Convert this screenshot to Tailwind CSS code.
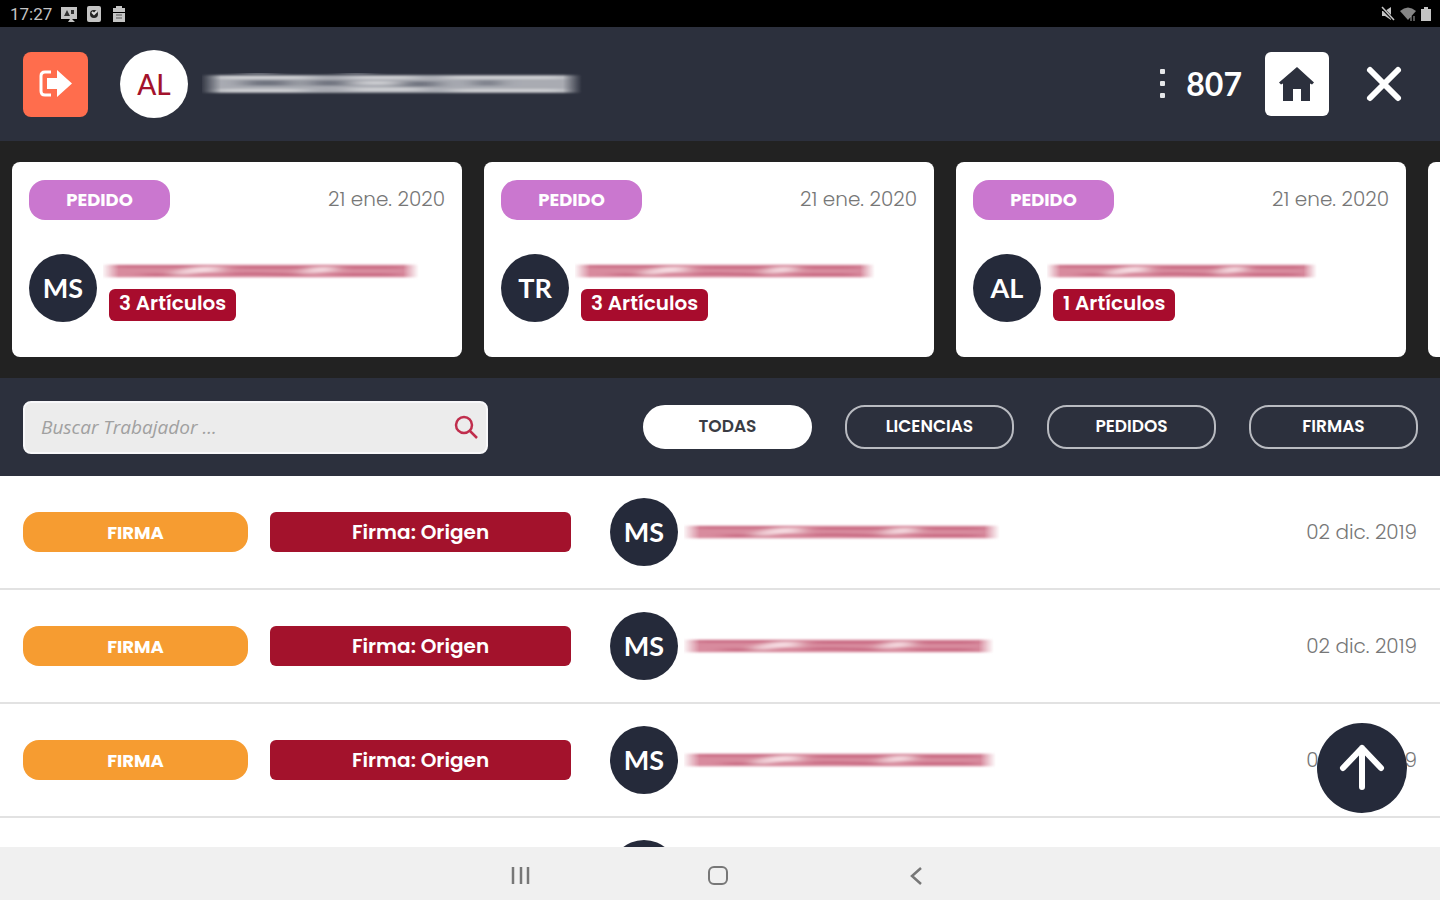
<!DOCTYPE html>
<html lang="es">
<head>
  <meta charset="UTF-8">
  <meta name="viewport" content="width=device-width, initial-scale=1.0">
  <title>Tareas pendientes</title>
  <script src="https://cdn.jsdelivr.net/npm/@tailwindcss/browser@4"></script>
</head>
<body class="h-screen flex flex-col overflow-hidden bg-white font-[Poppins,Inter,sans-serif]">

  <!-- Trazos para nombres ocultos -->
  <svg class="absolute w-0 h-0" aria-hidden="true">
    <defs>
      <linearGradient id="fade" x1="0" x2="1" y1="0" y2="0">
        <stop offset="0" stop-color="#fff" stop-opacity="0.1"/>
        <stop offset="0.05" stop-color="#fff"/>
        <stop offset="0.95" stop-color="#fff"/>
        <stop offset="1" stop-color="#fff" stop-opacity="0"/>
      </linearGradient>
      <filter id="soft" x="-5%" y="-40%" width="110%" height="180%"><feGaussianBlur stdDeviation="9 1"/></filter>
      <mask id="ends" maskUnits="userSpaceOnUse" x="0" y="0" width="320" height="20"><rect width="320" height="20" fill="url(#fade)"/></mask>
      <symbol id="nombre" viewBox="0 0 320 20" preserveAspectRatio="none">
        <g mask="url(#ends)">
          <g filter="url(#soft)">
            <rect x="-10" y="3" width="340" height="14" fill="#d88b9e"/>
            <path d="M10 5h85M130 6h80M235 6h70M125 14c30-3 50 1 80 0M235 14h65M40 14h50" fill="none" stroke="#c96c84" stroke-width="3"/>
            <path d="M75 14c15-6 30-7 42-5M205 13c8-6 18-5 28-5" fill="none" stroke="#f6dce2" stroke-width="6"/>
          </g>
        </g>
      </symbol>
      <symbol id="usuario" viewBox="0 0 320 20" preserveAspectRatio="none">
        <g mask="url(#ends)">
          <g filter="url(#soft)">
            <rect x="-10" y="2" width="340" height="16" fill="#a9abb2"/>
            <path d="M35 0h25M120 0h20" stroke="#8b8e97" stroke-width="2"/>
            <path d="M12 4h80M125 4h55M205 4h100M12 16h75M125 15h60M210 16h95M130 9h35" fill="none" stroke="#cfd0d4" stroke-width="3"/>
            <path d="M90 9h34M166 10h34M35 9h40M230 9h20" fill="none" stroke="#6e727e" stroke-width="5"/>
          </g>
        </g>
      </symbol>
    </defs>
  </svg>

  <!-- Barra de estado -->
  <div class="h-[27px] shrink-0 bg-black text-[#c4c4c4] flex items-center justify-between pl-2.5 pr-2">
    <div class="flex items-center gap-[9px]">
      <span class="font-[Roboto,sans-serif] text-[17px] leading-5">17:27</span>
      <svg class="w-4 h-4" viewBox="0 0 16 16" fill="currentColor"><path d="M0 1h16v12h-5l3 3H7l2-3H0z"/><path d="M3 10l3-6 3 6zM10 4h3v4h-3z" fill="#333"/></svg>
      <svg class="w-4 h-4" viewBox="0 0 16 16"><rect x="1" width="14" height="16" rx="2" fill="currentColor"/><circle cx="8" cy="8" r="4" fill="#222"/><path d="M6 6l2 2 3-3" fill="none" stroke="#ddd" stroke-width="2"/></svg>
      <svg class="w-4 h-4" viewBox="0 0 16 16" fill="currentColor"><path d="M5 0h6v2h3v4H2V2h3zM2 7h12v9H2z"/><path d="M5 9h6M5 12h6" stroke="#555"/></svg>
    </div>
    <div class="flex items-center gap-1">
      <svg class="w-4 h-4" viewBox="0 0 16 16" fill="currentColor"><path d="M2 5h3l6-4v13l-6-4H2z"/><path d="M1 1l13 13" stroke="#000" stroke-width="3"/><path d="M2 1l12 13" stroke="currentColor" stroke-width="1.5"/></svg>
      <svg class="w-4 h-4" viewBox="0 0 16 16" fill="#858585"><path d="M0 5q8-7 16 0L8 14z"/><path d="M11 10v5M14 10v5" stroke="#aaa"/></svg>
      <svg class="w-3 h-4" viewBox="0 0 12 16" fill="currentColor"><path d="M4 1h4v2h3v12H1V3h3z"/></svg>
    </div>
  </div>

  <!-- Cabecera -->
  <header class="h-[114px] shrink-0 bg-[#2c303d] flex items-center pl-[23px] pr-9">
    <button type="button" aria-label="Salir" class="w-[65px] h-[65px] rounded-lg bg-[#ff6d4d] flex items-center justify-center">
      <svg class="w-9 h-8" viewBox="0 0 36 32" fill="#fff"><path d="M13 4H7Q3 4 3 8v15q0 4 4 4h6" fill="none" stroke="#fff" stroke-width="3"/><path d="M9 10h10V2l15 13.500L19 29v-8H9z"/></svg>
    </button>
    <div class="ml-8 w-[68px] h-[68px] rounded-full bg-white text-[#a3122c] font-[Lato,sans-serif] text-[28px] font-medium flex items-center justify-center">AL</div>
    <svg class="ml-3.5 w-[380px] h-[22px]" aria-hidden="true"><use href="#usuario"/></svg>
    <div class="ml-auto flex items-center">
      <button type="button" aria-label="Más opciones" class="w-2 h-9">
        <svg class="w-2 h-9" viewBox="0 0 8 36" fill="#e6e7ea"><rect x="2" y="3" width="5" height="5" rx="1"/><rect x="2" y="15" width="5" height="5" rx="1"/><rect x="2" y="27" width="5" height="5" rx="1"/></svg>
      </button>
      <span class="ml-5 text-white font-[Lato,sans-serif] font-bold text-[32px] leading-10">807</span>
      <button type="button" aria-label="Inicio" class="ml-[23px] w-16 h-16 rounded-md bg-white flex items-center justify-center">
        <svg class="w-9 h-9" viewBox="0 0 36 36" fill="#2c303d"><path d="M18 1l17 15.500-2 2-2-1V35H22V23h-8v12H4V17.500l-2 1-2-2z"/></svg>
      </button>
      <button type="button" aria-label="Cerrar" class="ml-[35px] w-10 h-10">
        <svg class="w-10 h-10" viewBox="0 0 40 40" fill="none" stroke="#fff" stroke-width="6" stroke-linecap="round"><path d="M6 6l28 28M34 6L6 34"/></svg>
      </button>
    </div>
  </header>

  <!-- Tarjetas -->
  <section id="tarjetas" class="h-[237px] shrink-0 bg-[#222222] flex items-center gap-[22px] px-3 overflow-hidden"></section>

  <!-- Buscador y filtros -->
  <div class="h-[98px] shrink-0 bg-[#2c303d] flex items-center justify-between pl-[23px] pr-[22px]">
    <form class="w-[465px] h-[53px] rounded-lg bg-[#ececec] border-2 border-[#f8f8fa] flex items-center pl-4 pr-2">
      <input type="search" aria-label="Buscar Trabajador" placeholder="Buscar Trabajador ..." class="flex-1 min-w-0 bg-transparent outline-none font-['Open_Sans',sans-serif] italic font-medium text-[19px] placeholder:text-[#a0a0a0]">
      <button type="submit" aria-label="Buscar">
        <svg class="w-6 h-6" viewBox="0 0 24 24" fill="none" stroke="#c02e4d" stroke-width="2.500"><circle cx="10" cy="10" r="8"/><path d="M16 16l7 7"/></svg>
      </button>
    </form>
    <div class="flex gap-[33px] text-[17px] font-semibold">
      <button type="button" class="w-[169px] h-11 rounded-[22px] border-2 border-white bg-white text-[#3a3c44]">TODAS</button>
      <button type="button" class="w-[169px] h-11 rounded-[20px] border-2 border-[#b9bbc1] text-white">LICENCIAS</button>
      <button type="button" class="w-[169px] h-11 rounded-[20px] border-2 border-[#b9bbc1] text-white">PEDIDOS</button>
      <button type="button" class="w-[169px] h-11 rounded-[20px] border-2 border-[#b9bbc1] text-white">FIRMAS</button>
    </div>
  </div>

  <!-- Lista -->
  <main class="relative flex-1 min-h-0 overflow-hidden">
    <ul id="lista"></ul>
    <button type="button" aria-label="Volver arriba" class="absolute right-[33px] bottom-[34px] w-[90px] h-[90px] rounded-full bg-[#252a3a] flex items-center justify-center">
      <svg class="w-12 h-12" viewBox="0 0 48 48" fill="none" stroke="#fff" stroke-width="6" stroke-linecap="round" stroke-linejoin="round"><path d="M24 43V4M5 24L24 4l19 20"/></svg>
    </button>
  </main>

  <!-- Navegación -->
  <nav class="h-[53px] shrink-0 bg-[#f0f0f0] text-[#777777] flex items-center justify-center gap-[174px] pr-1 pt-1">
    <button type="button" aria-label="Recientes"><svg class="w-6 h-6" viewBox="0 0 24 24" stroke="currentColor" stroke-width="2.500"><path d="M5 3v17M13 3v17M20 3v17"/></svg></button>
    <button type="button" aria-label="Inicio"><svg class="w-6 h-6" viewBox="0 0 24 24" fill="none" stroke="currentColor" stroke-width="2"><rect x="3" y="3" width="18" height="17" rx="5"/></svg></button>
    <button type="button" aria-label="Atrás"><svg class="w-6 h-6" viewBox="0 0 24 24" fill="none" stroke="currentColor" stroke-width="2.500"><path d="M17 4l-9 8 9 8"/></svg></button>
  </nav>

  <script>
    const pedidos = [
      { iniciales: 'MS', articulos: 3, ancho: 316 },
      { iniciales: 'TR', articulos: 3, ancho: 300 },
      { iniciales: 'AL', articulos: 1, ancho: 270 }
    ];
    const firmas = [316, 310, 312, 312];

    document.getElementById('tarjetas').innerHTML = pedidos.map(p => `
      <article class="w-[450px] h-[195px] shrink-0 rounded-lg bg-white px-[17px] pt-[18px]">
        <div class="flex items-center justify-between">
          <span class="w-[141px] h-10 pb-0.5 rounded-2xl bg-[#ca77cf] text-white text-[18px] font-bold flex items-center justify-center">PEDIDO</span>
          <time class="text-[20px] leading-6 pb-0.5 font-light text-[#777777]">21 ene. 2020</time>
        </div>
        <div class="mt-[34px] flex">
          <span class="w-[68px] h-[68px] rounded-full bg-[#252a3a] text-white font-[Lato,sans-serif] text-[27px] font-bold flex items-center justify-center">${p.iniciales}</span>
          <div class="ml-1.5 pt-2">
            <svg class="h-[18px]" style="width:${p.ancho}px" aria-hidden="true"><use href="#nombre"/></svg>
            <span class="ml-1.5 mt-[9px] inline-flex items-center h-8 rounded-md bg-[#a80c2d] text-white text-[20px] leading-6 font-semibold px-2.5 pb-1">${p.articulos} Artículos</span>
          </div>
        </div>
      </article>`).join('') + '<article class="w-[450px] h-[195px] shrink-0 rounded-lg bg-white"></article>';

    document.getElementById('lista').innerHTML = firmas.map(ancho => `
      <li class="h-[114px] border-b-2 border-[#e2e2e2] flex items-center px-[23px]">
        <span class="w-[225px] h-10 rounded-2xl bg-[#f69c31] text-white text-[18px] font-bold flex items-center justify-center">FIRMA</span>
        <span class="ml-[22px] w-[301px] h-10 rounded-md bg-[#a3122c] text-white text-[20px] font-semibold flex items-center justify-center">Firma: Origen</span>
        <span class="ml-[39px] w-[68px] h-[68px] rounded-full bg-[#252a3a] text-white font-[Lato,sans-serif] text-[27px] font-bold flex items-center justify-center">MS</span>
        <svg class="ml-1.5 h-[18px]" style="width:${ancho}px" aria-hidden="true"><use href="#nombre"/></svg>
        <time class="ml-auto text-[20px] font-light text-[#777777]">02 dic. 2019</time>
      </li>`).join('');
  </script>
</body>
</html>
